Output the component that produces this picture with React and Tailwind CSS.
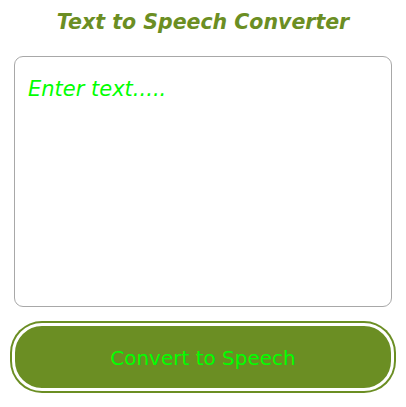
const App = () => {
  return (
    <div className="flex min-h-screen flex-col bg-white px-[14px] pt-[6px] font-['DejaVu_Sans',sans-serif]">
      <h1 className="text-center text-[20.5px] font-bold italic leading-[32px] text-[#6b8e23]">
        Text to Speech Converter
      </h1>
      <textarea
        className="mt-[18px] h-[251px] w-full resize-none rounded-[9px] border border-[#a8a8a8] px-[13px] pb-[14px] pt-[16px] text-[21px] italic leading-[32px] text-[#00ff00] outline-none placeholder:text-[#00ff00]"
        placeholder="Enter text....."
      />
      <button className="mx-[-2px] mt-[16px] h-[68px] rounded-[30px] border-[3px] border-white bg-[#6b8e23] pt-[2px] text-[20px] text-[#00ff00] ring-2 ring-[#6b8e23]">
        Convert to Speech
      </button>
    </div>
  );
};

export default App;
